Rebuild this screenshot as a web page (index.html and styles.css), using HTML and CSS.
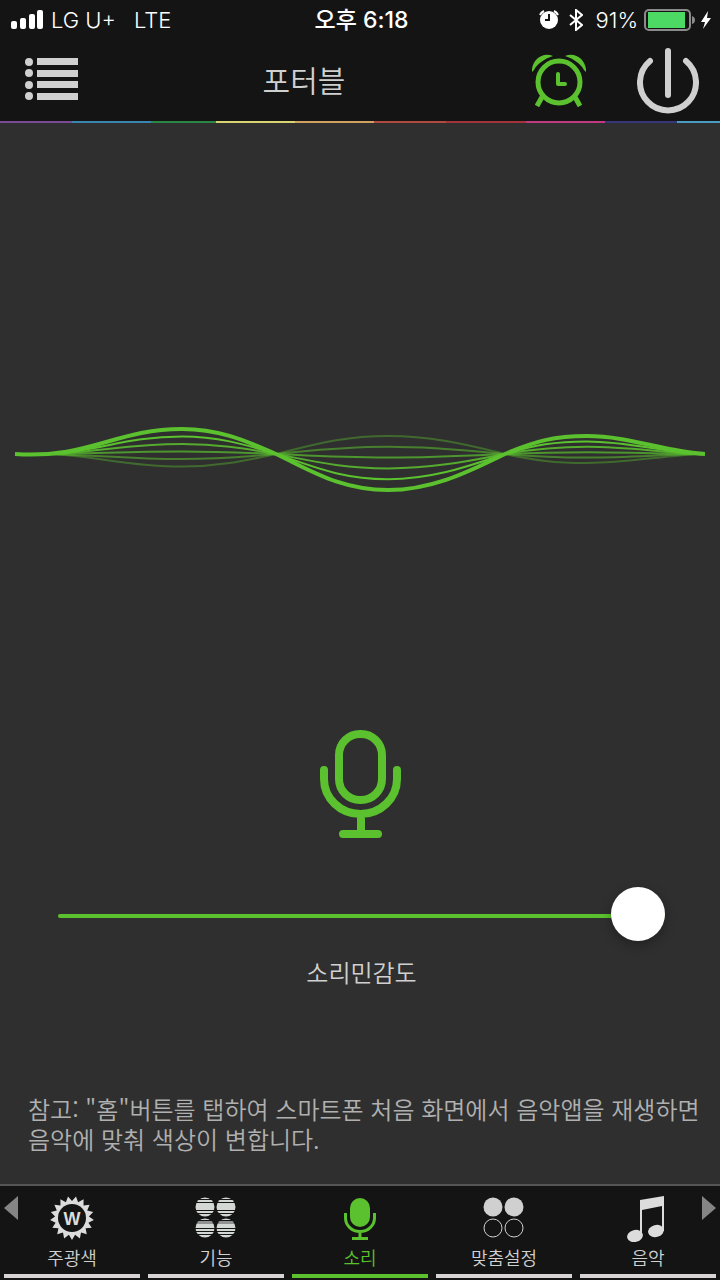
FILE: index.html
```html
<!DOCTYPE html>
<html lang="ko">
<head>
    <meta charset="UTF-8">
    <meta name="viewport" content="width=device-width, initial-scale=1.0">
    <title>포터블</title>
    <link rel="stylesheet" href="styles.css">
</head>
<body>
    <div class="app">

        <div class="status-bar">
            <div class="status-left">
                <svg class="signal" width="32" height="20" viewBox="0 0 32 20" fill="#fff">
                    <rect x="0" y="11" width="6" height="8" rx="2"/>
                    <rect x="9" y="8" width="6" height="11" rx="2"/>
                    <rect x="18" y="4" width="6" height="15" rx="2"/>
                    <rect x="26" y="0" width="6" height="19" rx="2"/>
                </svg>
                <span class="carrier">LG U+</span>
                <span>LTE</span>
            </div>
            <div class="status-time">오후 6:18</div>
            <div class="status-right">
                <svg width="20" height="20" viewBox="0 0 20 20">
                    <circle cx="10" cy="10" r="9" fill="#fff"/>
                    <path d="M1 5a8 8 0 0 1 4-4M19 5a8 8 0 0 0-4-4" fill="none" stroke="#fff" stroke-width="2"/>
                    <path d="M10 4v6H6" fill="none" stroke="#141414" stroke-width="2"/>
                </svg>
                <svg class="bluetooth" width="14" height="22" viewBox="0 0 14 22">
                    <path d="M1 6l12 10-6 5V1l6 5L1 16" fill="none" stroke="#fff" stroke-width="2"/>
                </svg>
                <span>91%</span>
                <svg class="battery" width="52" height="24" viewBox="0 0 52 24">
                    <rect x="1" y="2" width="45" height="20" rx="4" fill="none" stroke="#8b8b8b" stroke-width="2"/>
                    <rect x="4" y="4" width="37" height="16" fill="#4cd964"/>
                    <path d="M48 8q3 1 3 4t-3 4z" fill="#8b8b8b"/>
                </svg>
                <svg width="12" height="20" viewBox="0 0 12 20">
                    <path d="M8 1L1 12h4L3 19l8-11H7z" fill="#fff"/>
                </svg>
            </div>
        </div>

        <header class="header">
            <button type="button" class="icon-btn" aria-label="메뉴">
                <svg width="54" height="46" viewBox="0 0 54 46" fill="#d0d0d0">
                    <circle cx="4" cy="4" r="4"/><rect x="12" y="0" width="41" height="7"/>
                    <circle cx="4" cy="15" r="4"/><rect x="12" y="12" width="41" height="7"/>
                    <circle cx="4" cy="27" r="4"/><rect x="12" y="23" width="41" height="7"/>
                    <circle cx="4" cy="38" r="4"/><rect x="12" y="35" width="41" height="7"/>
                </svg>
            </button>
            <h1 class="title">포터블</h1>
            <button type="button" class="icon-btn alarm-btn" aria-label="알람">
                <svg width="54" height="54" viewBox="0 0 54 54" fill="none" stroke="#5bc12e">
                    <circle cx="27" cy="28" r="21" stroke-width="5"/>
                    <path d="M26 20v10h7" stroke-width="4" stroke-linecap="round" stroke-linejoin="round"/>
                    <path d="M10 43L5 52M43 43l5 9" stroke-width="5"/>
                    <path d="M21 2C10-3-1 7 0 18L2 16C5 10 12 5 21 2zM33 2C44-3 55 7 54 18L52 16C49 10 42 5 33 2z" fill="#5bc12e" stroke="none"/>
                </svg>
            </button>
            <button type="button" class="icon-btn" aria-label="전원">
                <svg width="62" height="66" viewBox="0 0 62 66" fill="none" stroke="#d0d0d0" stroke-width="6" stroke-linecap="round">
                    <path d="M31 3v44"/>
                    <path d="M13 13a28 28 0 1 0 36 0"/>
                </svg>
            </button>
        </header>
        <div class="rainbow"></div>

        <main class="content">
            <div class="wave-area">
                <svg class="wave" viewBox="0 -40 720 80" fill="none" stroke="#5bc12e">
                    <defs>
                        <path id="wave" d="M15 0C90 5 115-25 182-25C222-25 250-11 276 0C310 16 340 36 388 36C436 36 475 14 505 0C535-13 555-18 587-18C630-18 665-2 705 0" vector-effect="non-scaling-stroke"/>
                    </defs>
                    <use href="#wave" transform="scale(1 -.5)" stroke-width="2" opacity=".4"/>
                    <use href="#wave" transform="scale(1 -.2)" stroke-width="2" opacity=".55"/>
                    <use href="#wave" transform="scale(1 .1)" stroke-width="2" opacity=".7"/>
                    <use href="#wave" transform="scale(1 .4)" stroke-width="2" opacity=".85"/>
                    <use href="#wave" transform="scale(1 .7)" stroke-width="2"/>
                    <use href="#wave" stroke-width="4"/>
                </svg>
            </div>

            <svg class="mic" width="82" height="108" viewBox="-1 0 82 108" fill="none" stroke="#5bc12e" stroke-width="8" stroke-linecap="round">
                <rect x="19" y="4" width="43" height="66" rx="21"/>
                <path d="M4 40v9a36.5 35 0 0 0 73 0v-9M41 84v20M23 104h35"/>
            </svg>

            <div class="sensitivity">
                <input type="range" id="sensitivity" min="0" max="100" value="100">
                <label for="sensitivity">소리민감도</label>
            </div>

            <p class="note">참고: "홈"버튼를 탭하여 스마트폰 처음 화면에서 음악앱을 재생하면 음악에 맞춰 색상이 변합니다.</p>
        </main>

        <nav class="tabs">
            <button type="button" class="arrow arrow-left" aria-label="이전">
                <svg width="14" height="24" viewBox="0 0 14 24"><path d="M14 0v24L0 12z" fill="#858585"/></svg>
            </button>
            <a href="#" class="tab">
                <svg width="44" height="44" viewBox="-22 -22 44 44">
                    <path d="M0 22L3.1 16.7 7.9 20.5 9 14.5 14.8 16.3 13.6 10.3 19.7 9.8 16.4 4.7 21.9 2 16.9-1.6 21.2-6 15.2-7.6 17.6-13.3 11.5-12.6 11.6-18.7 6.1-15.8 4-21.6 0-17-4-21.6-6.1-15.8-11.6-18.7-11.5-12.6-17.6-13.3-15.2-7.6-21.2-6-16.9-1.6-21.9 2-16.4 4.7-19.7 9.8-13.6 10.3-14.8 16.3-9 14.5-7.9 20.5-3.1 16.7z" fill="#dcdcdc"/>
                    <circle r="14" fill="#141414"/>
                    <text class="sun-letter" x="0" y="7" text-anchor="middle" fill="#dcdcdc">W</text>
                </svg>
                <span>주광색</span>
            </a>
            <a href="#" class="tab">
                <svg width="44" height="44" viewBox="0 0 44 44">
                    <g fill="#d4d8d4">
                        <circle cx="11" cy="11" r="9.5"/><circle cx="32" cy="11" r="9.5"/>
                        <circle cx="11" cy="32" r="9.5"/><circle cx="32" cy="32" r="9.5"/>
                    </g>
                    <path d="M0 24h44v4H0z" fill="#141414" opacity=".35"/>
                    <path d="M0 3.5h44M0 6.5h44M0 14.5h44M0 17.5h44M0 24.5h44M0 32.5h44M0 35.5h44M0 38.5h44" stroke="#141414"/>
                </svg>
                <span>기능</span>
            </a>
            <a href="#" class="tab active">
                <svg width="44" height="44" viewBox="0 0 44 44">
                    <rect x="12" y="2" width="20" height="29" rx="10" fill="#5bc12e"/>
                    <path d="M7.5 17v5a14.5 13.5 0 0 0 29 0v-5M22 35v8M14 42.5h16" fill="none" stroke="#5bc12e" stroke-width="3"/>
                </svg>
                <span>소리</span>
            </a>
            <a href="#" class="tab">
                <svg width="44" height="44" viewBox="0 0 44 44">
                    <g fill="#d0d0d0"><circle cx="11" cy="11" r="9.5"/><circle cx="32" cy="11" r="9.5"/></g>
                    <g fill="none" stroke="#d0d0d0"><circle cx="11" cy="32" r="9"/><circle cx="32" cy="32" r="9"/></g>
                </svg>
                <span>맞춤설정</span>
            </a>
            <a href="#" class="tab">
                <svg width="44" height="46" viewBox="0 0 44 46" fill="#dcdcdc">
                    <ellipse cx="9" cy="40" rx="8" ry="6" transform="rotate(-15 9 40)"/>
                    <ellipse cx="30" cy="35" rx="8" ry="6" transform="rotate(-15 30 35)"/>
                    <path d="M14 4L38 0v35h-2V10L16 14v26h-2z"/>
                </svg>
                <span>음악</span>
            </a>
            <button type="button" class="arrow arrow-right" aria-label="다음">
                <svg width="14" height="24" viewBox="0 0 14 24"><path d="M0 0v24l14-12z" fill="#858585"/></svg>
            </button>
        </nav>

    </div>
</body>
</html>
```

FILE: styles.css
```css
* {
    margin: 0;
    padding: 0;
    box-sizing: border-box;
}

body {
    background-color: #2f2f2f;
    color: #d0d0d0;
    font-family: 'Inter', 'Noto Sans CJK KR', sans-serif;
    font-weight: 350;
}

svg {
    display: block;
    flex-shrink: 0;
}

button {
    background: none;
    border: none;
    cursor: pointer;
}

.app {
    display: flex;
    flex-direction: column;
    min-height: 100vh;
}

/* status bar */
.status-bar {
    display: grid;
    grid-template-columns: 1fr auto 1fr;
    align-items: center;
    height: 40px;
    padding: 0 8px 0 11px;
    background-color: #141414;
    color: #fff;
    font-size: 22px;
    line-height: 24px;
}

.status-left,
.status-right {
    display: flex;
    align-items: center;
}

.carrier {
    margin: 0 18px 0 8px;
}

.status-time {
    font-size: 23px;
    font-weight: 500;
}

.status-right {
    justify-content: flex-end;
}

.bluetooth {
    margin: 0 12px 0 10px;
}

.battery {
    margin: 0 4px 0 6px;
}

/* header */
.header {
    display: flex;
    align-items: center;
    height: 81px;
    padding: 0 21px 0 25px;
    background-color: #141414;
}

.title {
    flex: 1;
    padding: 0 3px 4px 0;
    font-family: 'Noto Sans CJK KR', sans-serif;
    font-size: 30px;
    font-weight: 350;
    line-height: 40px;
    text-align: center;
}

.alarm-btn {
    margin-right: 51px;
}

.rainbow {
    height: 2px;
    background: linear-gradient(90deg,
        #7b4a94 0 10%,
        #3a84b0 10% 21%,
        #2b8545 21% 30%,
        #d8d470 30% 41%,
        #d0a060 41% 52%,
        #b04a40 52% 62%,
        #a03438 62% 73%,
        #c03a80 73% 84%,
        #35357a 84% 94%,
        #4a9cc0 94%);
}

/* content */
.content {
    display: flex;
    flex: 1;
    flex-direction: column;
    align-items: center;
}

.wave-area {
    display: flex;
    flex: 1;
    align-items: center;
    width: 100%;
    padding-top: 54px;
}

.wave {
    width: 100%;
}

.sensitivity {
    display: flex;
    flex-direction: column;
    align-items: center;
    width: 100%;
    margin-top: 51px;
    padding: 0 55px 0 58px;
}

.sensitivity label {
    margin-top: 13px;
    font-family: 'Noto Sans CJK KR', sans-serif;
    font-size: 24px;
    line-height: 32px;
}

input[type="range"] {
    -webkit-appearance: none;
    appearance: none;
    width: 100%;
    height: 54px;
    background: transparent;
    cursor: pointer;
}

input[type="range"]::-webkit-slider-runnable-track {
    height: 4px;
    border-radius: 2px;
    background-color: #5bc12e;
}

input[type="range"]::-webkit-slider-thumb {
    -webkit-appearance: none;
    width: 54px;
    height: 54px;
    margin-top: -27px;
    border-radius: 50%;
    background-color: #fff;
    box-shadow: 0 4px 12px rgba(0, 0, 0, 0.3);
}

.note {
    width: 100%;
    margin-top: 106px;
    padding: 0 20px 30px 28px;
    color: #b0b0b0;
    font-family: 'Noto Sans CJK KR', sans-serif;
    font-size: 24px;
    line-height: 30px;
}

/* bottom tabs */
.tabs {
    position: relative;
    display: grid;
    grid-template-columns: repeat(5, 1fr);
    gap: 8px;
    padding: 10px 4px 2px;
    border-top: 2px solid #555;
    background-color: #141414;
}

.tab {
    display: flex;
    flex-direction: column;
    align-items: center;
    justify-content: space-between;
    height: 82px;
    border-bottom: 4px solid #d8d4d6;
    color: #d0d0d0;
    font-family: 'Noto Sans CJK KR', sans-serif;
    font-size: 18px;
    line-height: 24px;
    text-decoration: none;
}

.tab span {
    margin-bottom: 5px;
}

.tab.active {
    border-color: #5bc12e;
    color: #5bc12e;
}

.sun-letter {
    font-family: 'Liberation Sans', sans-serif;
    font-size: 18px;
    font-weight: 700;
}

.arrow {
    position: absolute;
    top: 10px;
}

.arrow-left {
    left: 4px;
}

.arrow-right {
    right: 4px;
}
```
